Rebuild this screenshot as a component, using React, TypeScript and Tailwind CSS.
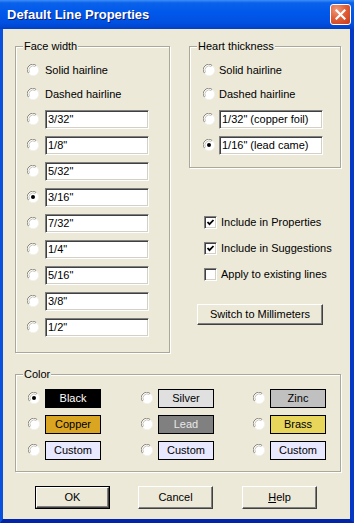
import type { ReactNode } from "react";

const faceWidths = ['3/32"', '1/8"', '5/32"', '3/16"', '7/32"', '1/4"', '5/16"', '3/8"', '1/2"'];

const colors = [
  { name: "Black", bg: "bg-black text-white", checked: true },
  { name: "Silver", bg: "bg-[#E0E0E0] text-black" },
  { name: "Zinc", bg: "bg-[#C0C0C0] text-black" },
  { name: "Copper", bg: "bg-[#DAA520] text-black" },
  { name: "Lead", bg: "bg-[#808080] text-[#E8E8E8]" },
  { name: "Brass", bg: "bg-[#E8D65A] text-black" },
  { name: "Custom", bg: "bg-[#E8E8FF] text-black" },
  { name: "Custom", bg: "bg-[#E8E8FF] text-black" },
  { name: "Custom", bg: "bg-[#E8E8FF] text-black" },
];

function Radio({ checked = false }: { checked?: boolean }) {
  return (
    <svg width="12" height="12" viewBox="0 0 12 12" className="shrink-0">
      <circle cx="6" cy="6" r="5.5" fill="#fff" />
      <path d="M1.6 9.2 A5.4 5.4 0 0 1 9.2 1.6" stroke="#85837A" strokeWidth="1" fill="none" />
      <path d="M2.6 8.4 A4.2 4.2 0 0 1 8.4 2.6" stroke="#C8C5BA" strokeWidth="1" fill="none" />
      <path d="M10.4 2.8 A5.4 5.4 0 0 1 2.8 10.4" stroke="#F2F1EC" strokeWidth="1" fill="none" />
      {checked && <circle cx="6" cy="6" r="2" fill="#000" />}
    </svg>
  );
}

function Checkbox({ checked = false }: { checked?: boolean }) {
  return (
    <div className="w-[13px] h-[13px] shrink-0 bg-white border border-t-[#808080] border-l-[#808080] border-b-white border-r-white shadow-[inset_1px_1px_0_#404040,inset_-1px_-1px_0_#D4D0C8] flex items-center justify-center">
      {checked && (
        <svg width="9" height="9" viewBox="0 0 9 9">
          <polyline points="1.5,4 3.5,6.2 7.5,2" stroke="#000" strokeWidth="1.8" fill="none" />
        </svg>
      )}
    </div>
  );
}

function Edit({ value }: { value: string }) {
  return (
    <div className="w-[104px] h-[19px] bg-white border border-t-[#808080] border-l-[#808080] border-b-white border-r-white shadow-[inset_1px_1px_0_#404040,inset_-1px_-1px_0_#D4D0C8] pl-[2px] leading-[17px] whitespace-nowrap overflow-hidden">
      {value}
    </div>
  );
}

function Group({ label, className, children }: { label: string; className: string; children: ReactNode }) {
  return (
    <div className={"relative border border-[#ACA899] shadow-[inset_1px_1px_0_#fff,1px_1px_0_#fff] " + className}>
      <span className="absolute -top-[7px] left-[7px] bg-[#ECE9D8] px-[1px] leading-[13px]">{label}</span>
      {children}
    </div>
  );
}

function Button({ children, isDefault = false, className = "" }: { children: ReactNode; isDefault?: boolean; className?: string }) {
  return (
    <div className={(isDefault ? "border border-black " : "") + "h-[23px] " + className}>
      <div className="h-full flex items-center justify-center bg-[#ECE9D8] border border-t-white border-l-white border-r-[#404040] border-b-[#404040] shadow-[inset_-1px_-1px_0_#808080]">
        {children}
      </div>
    </div>
  );
}

export default function App() {
  return (
    <div className="w-[354px] h-[523px] flex flex-col overflow-hidden text-[11px] text-black font-['Liberation_Sans',Arial,sans-serif]">
      {/* title bar */}
      <div className="h-[29px] shrink-0 flex items-center justify-between pl-[7px] pr-[3px] bg-[linear-gradient(180deg,#3D8EF7_0%,#0A61EA_10%,#0058EA_45%,#0050E0_80%,#0040C8_100%)]">
        <span className="text-white font-bold text-[13px] [text-shadow:1px_1px_0_#0A1F80]">Default Line Properties</span>
        <div className="w-[21px] h-[21px] rounded-[3px] border border-white bg-[radial-gradient(circle_at_30%_25%,#F09A7C_0%,#E0603A_45%,#C63A18_100%)] flex items-center justify-center">
          <svg width="11" height="11" viewBox="0 0 11 11">
            <path d="M1.5 1.5 L9.5 9.5 M9.5 1.5 L1.5 9.5" stroke="#fff" strokeWidth="2.2" strokeLinecap="square" />
          </svg>
        </div>
      </div>

      {/* client area */}
      <div className="flex-1 flex flex-col bg-[#ECE9D8] border-l-[3px] border-r-[4px] border-b-[4px] border-l-[#0A52DE] border-r-[#0538C4] border-b-[#0224A8] pl-[12px] pt-[17px]">
        <div className="flex gap-[19px]">
          <Group label="Face width" className="w-[155px] h-[307px] pt-[11px] pl-[11px]">
            <div className="flex items-center h-[24px] gap-[6px]">
              <Radio />
              <span>Solid hairline</span>
            </div>
            <div className="flex items-center h-[24px] gap-[6px]">
              <Radio />
              <span>Dashed hairline</span>
            </div>
            {faceWidths.map((w) => (
              <div key={w} className="flex items-center h-[26px] gap-[6px]">
                <Radio checked={w === '3/16"'} />
                <Edit value={w} />
              </div>
            ))}
          </Group>

          <div className="w-[152px] flex flex-col">
            <Group label="Heart thickness" className="h-[122px] pt-[11px] pl-[13px]">
              <div className="flex items-center h-[24px] gap-[4px]">
                <Radio />
                <span>Solid hairline</span>
              </div>
              <div className="flex items-center h-[24px] gap-[4px]">
                <Radio />
                <span>Dashed hairline</span>
              </div>
              <div className="flex items-center h-[26px] gap-[4px]">
                <Radio />
                <Edit value={'1/32" (copper foil)'} />
              </div>
              <div className="flex items-center h-[26px] gap-[4px]">
                <Radio checked />
                <Edit value={'1/16" (lead came)'} />
              </div>
            </Group>

            <div className="mt-[41px] pl-[15px]">
              <div className="flex items-center h-[26px] gap-[4px]">
                <Checkbox checked />
                <span>Include in Properties</span>
              </div>
              <div className="flex items-center h-[26px] gap-[4px]">
                <Checkbox checked />
                <span>Include in Suggestions</span>
              </div>
              <div className="flex items-center h-[26px] gap-[4px]">
                <Checkbox />
                <span>Apply to existing lines</span>
              </div>
            </div>

            <Button className="mt-[17px] ml-[8px] w-[126px] !h-[21px]">Switch to Millimeters</Button>
          </div>
        </div>

        <Group label="Color" className="mt-[21px] w-[326px] h-[98px] pt-[10px] pl-[12px]">
          <div className="grid grid-cols-[113px_112px_1fr]">
            {colors.map((c, i) => (
              <div key={i} className="flex items-center h-[26px] gap-[5px]">
                <Radio checked={c.checked} />
                <div className={"w-[56px] h-[19px] border border-black flex items-center justify-center " + c.bg}>{c.name}</div>
              </div>
            ))}
          </div>
        </Group>

        <div className="mt-[14px] ml-[20px] flex gap-[28px]">
          <Button isDefault className="w-[75px]">OK</Button>
          <Button className="w-[75px]">Cancel</Button>
          <Button className="w-[75px] ml-[1px]">
            <span>
              <span className="underline">H</span>elp
            </span>
          </Button>
        </div>
      </div>
    </div>
  );
}
